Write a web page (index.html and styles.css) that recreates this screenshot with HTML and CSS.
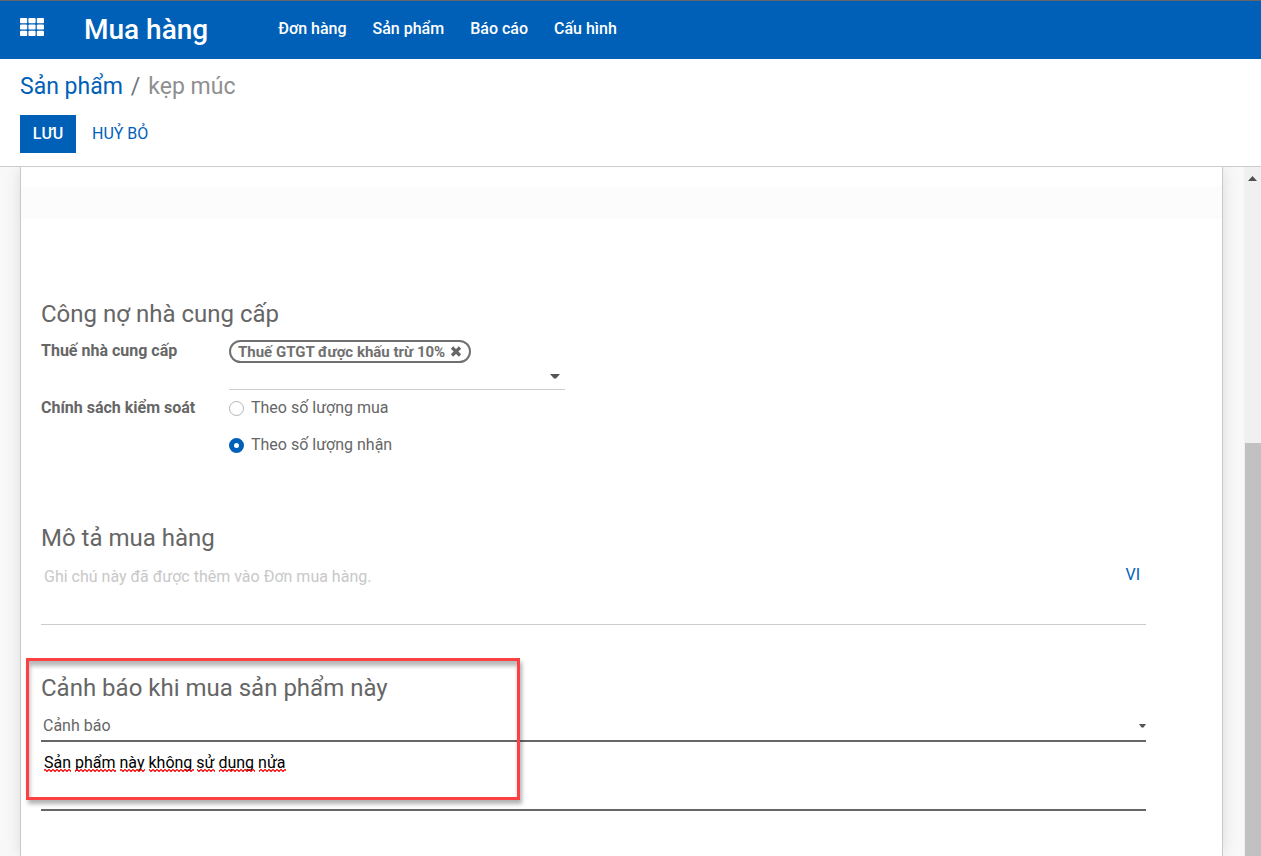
FILE: index.html
```
<!DOCTYPE html>
<html lang="vi">
<head>
<meta charset="utf-8">
<meta name="viewport" content="width=device-width, initial-scale=1">
<title>Mua hàng - kẹp múc</title>
<link rel="stylesheet" href="styles.css">
</head>
<body>
<header class="navbar">
  <button class="apps" type="button" aria-label="Ứng dụng">
    <svg width="24" height="18" viewBox="0 0 24 18" fill="#fff" aria-hidden="true">
      <rect x="0" y="0" width="7.200" height="5.200" rx="1"/><rect x="8.400" y="0" width="7.200" height="5.200" rx="1"/><rect x="16.800" y="0" width="7.200" height="5.200" rx="1"/>
      <rect x="0" y="6.400" width="7.200" height="5.200" rx="1"/><rect x="8.400" y="6.400" width="7.200" height="5.200" rx="1"/><rect x="16.800" y="6.400" width="7.200" height="5.200" rx="1"/>
      <rect x="0" y="12.800" width="7.200" height="5.200" rx="1"/><rect x="8.400" y="12.800" width="7.200" height="5.200" rx="1"/><rect x="16.800" y="12.800" width="7.200" height="5.200" rx="1"/>
    </svg>
  </button>
  <a class="brand" href="#">Mua hàng</a>
  <nav class="menu">
    <a href="#">Đơn hàng</a>
    <a href="#">Sản phẩm</a>
    <a href="#">Báo cáo</a>
    <a href="#">Cấu hình</a>
  </nav>
</header>

<div class="control-panel">
  <div class="breadcrumb"><a href="#">Sản phẩm</a><span class="slash">/</span><span class="current">kẹp múc</span></div>
  <div class="actions">
    <button class="btn btn-primary" type="button">LƯU</button>
    <button class="btn btn-link" type="button">HUỶ BỎ</button>
  </div>
</div>

<div class="view">
  <main class="content">
    <form class="sheet">
      <div class="band"></div>

      <section class="group debts">
        <h2>Công nợ nhà cung cấp</h2>
        <div class="fields">
          <label class="name" for="tax">Thuế nhà cung cấp</label>
          <div class="tags">
            <span class="tag">Thuế GTGT được khấu trừ 10%
              <button class="tag-remove" type="button" aria-label="Xoá">
                <svg width="12" height="11" viewBox="0 0 12 11" aria-hidden="true"><path d="M2 1.500 10 9.500M10 1.500 2 9.500" stroke="#666" stroke-width="3.200"/></svg>
              </button>
            </span>
            <div class="tag-entry">
              <input id="tax" type="text">
              <svg width="10" height="5" viewBox="0 0 10 5" fill="#555" aria-hidden="true"><path d="M0 0H10L6 4.500H4Z"/></svg>
            </div>
          </div>
          <span class="name" id="policy">Chính sách kiểm soát</span>
          <div class="radios" role="radiogroup" aria-labelledby="policy">
            <label><input type="radio" name="policy">Theo số lượng mua</label>
            <label><input type="radio" name="policy" checked>Theo số lượng nhận</label>
          </div>
        </div>
      </section>

      <section class="group">
        <h2 id="desc-title">Mô tả mua hàng</h2>
        <div class="description">
          <textarea aria-labelledby="desc-title" placeholder="Ghi chú này đã được thêm vào Đơn mua hàng."></textarea>
          <button class="lang" type="button">VI</button>
        </div>
      </section>

      <section class="group warning">
        <h2 id="warn-title">Cảnh báo khi mua sản phẩm này</h2>
        <div class="select-row">
          <select aria-labelledby="warn-title"><option>Cảnh báo</option></select>
          <svg width="7" height="4" viewBox="0 0 7 4" fill="#555" aria-hidden="true"><path d="M0 0H7L4.500 3.500H2.500Z"/></svg>
        </div>
        <div class="message">
          <textarea aria-labelledby="warn-title" spellcheck="false">Sản phẩm này không sử dụng nửa</textarea>
          <svg class="spelling" width="250" height="3" viewBox="0 0 250 3" aria-hidden="true">
            <defs><pattern id="wave" width="4" height="3" patternUnits="userSpaceOnUse"><path d="M-1 .5 0 .5 2 2.500 4 .5 5 .5" fill="none" stroke="#f00000" stroke-width="1.200"/></pattern></defs>
            <g fill="url(#wave)"><rect x="3" width="27" height="3"/><rect x="34" width="41" height="3"/><rect x="79" width="25" height="3"/><rect x="108" width="45" height="3"/><rect x="156" width="18" height="3"/><rect x="178" width="36" height="3"/><rect x="218" width="27" height="3"/></g>
          </svg>
        </div>
        <div class="highlight"></div>
      </section>
    </form>
  </main>
  <div class="scrollbar" aria-hidden="true">
    <svg width="9" height="5" viewBox="0 0 9 5" fill="#505050"><path d="M4.500 0 9 5H0Z"/></svg>
    <div class="thumb"></div>
  </div>
</div>
</body>
</html>
```
FILE: styles.css
```
* { box-sizing: border-box; }

body {
  margin: 0;
  height: 100vh;
  display: flex;
  flex-direction: column;
  overflow: hidden;
  background: #fff;
  color: #666;
  font: 16px/24px Roboto, "Noto Sans", sans-serif;
}

a { color: #0060b8; text-decoration: none; }

button, input, textarea, select {
  margin: 0;
  padding: 0;
  border: 0;
  border-radius: 0;
  background: none;
  color: inherit;
  font: inherit;
}

svg { display: block; }

.navbar {
  display: flex;
  align-items: center;
  flex: none;
  height: 59px;
  padding: 0 20px 2px;
  border-top: 1px solid #666;
  background: #0060b8;
}

.apps { margin-bottom: 4px; }
.navbar a { color: #fff; font-weight: 500; }
.navbar .brand { margin: 2px 70px 0 40px; font-size: 28px; line-height: 36px; }
.menu { display: flex; gap: 26px; }

.control-panel {
  flex: none;
  padding: 10px 20px 13px;
  border-bottom: 1px solid #ccc;
}

.breadcrumb { display: flex; gap: 8px; font-size: 23px; line-height: 36px; }
.slash { color: #6c757d; }
.current { color: #8f8f8f; }

.actions { display: flex; gap: 4px; padding-top: 10px; }
.btn { height: 38px; padding: 0 12px; }
.btn-primary { min-width: 56px; background: #0060b8; color: #fff; font-weight: 500; }
.btn-link { color: #0060b8; }

.view { display: flex; flex: 1; min-height: 0; }

.content {
  flex: 1;
  display: flex;
  min-width: 0;
  padding: 0 21px 0 20px;
  overflow: hidden;
  background: #f8f8f8;
}

.sheet {
  flex: 1;
  min-width: 0;
  padding: 19px 0 0;
  border: solid #c8c8d3;
  border-width: 0 1px;
  background: #fff;
  box-shadow: 0 0 16px -2px rgba(0, 0, 0, .15);
}

.band { height: 33px; background: #fcfcfc; }

.group { position: relative; margin: 0 76px 45px 20px; }
.debts { margin: 77px 76px 63px 20px; }

h2 { margin: 0; font-size: 24px; font-weight: 400; line-height: 36px; }

.fields {
  display: grid;
  grid-template-columns: 188px minmax(0, 336px);
  row-gap: 6px;
  padding-top: 7px;
}

.name { font-weight: 700; }

.tag {
  display: inline-flex;
  align-items: center;
  gap: 5px;
  height: 23px;
  margin-top: 1px;
  padding: 0 7px;
  border: 2px solid #707070;
  border-radius: 12px;
  font-size: 15px;
  line-height: 18px;
  font-weight: 700;
  color: #707070;
  vertical-align: top;
}

.tag-entry {
  display: flex;
  align-items: center;
  height: 27px;
  padding-right: 5px;
  border-bottom: 1px solid #ccc;
}

.tag-entry input { flex: 1; min-width: 0; outline: none; }

.radios { display: flex; flex-direction: column; gap: 13px; }
.radios label { display: flex; align-items: center; gap: 7px; }

.radios input {
  appearance: none;
  width: 15px;
  height: 15px;
  margin-top: 1px;
  border: 1px solid #b0b5ba;
  border-radius: 50%;
  background: #fff;
}

.radios input:checked { border: 5px solid #0060b8; }

.description {
  display: flex;
  align-items: flex-start;
  height: 69px;
  padding: 9px 6px 0 3px;
  border-bottom: 1px solid #ccc;
}

textarea { display: block; flex: 1; width: 100%; height: 58px; resize: none; outline: none; overflow: hidden; }
textarea::placeholder { color: #c8c8c8; opacity: 1; }
.lang { color: #0060b8; line-height: 20px; }

.select-row {
  display: flex;
  align-items: center;
  height: 36px;
  padding-top: 6px;
  border-bottom: 2px solid #666;
}

.select-row select { flex: 1; appearance: none; height: 24px; padding: 0 2px; outline: none; }

.message {
  position: relative;
  height: 69px;
  padding: 9px 3px 0;
  border-bottom: 2px solid #666;
  color: #000;
}

.spelling { position: absolute; left: 0; top: 27px; }

.highlight {
  position: absolute;
  left: -15px;
  top: -12px;
  width: 494px;
  height: 142px;
  border: 3px solid #fd4044;
  box-shadow: 2px 4px 4px rgba(0, 0, 0, .3), inset 1px 5px 4px rgba(0, 0, 0, .28);
  pointer-events: none;
}

.scrollbar {
  display: flex;
  flex-direction: column;
  align-items: center;
  flex: none;
  width: 17px;
  padding-top: 9px;
  background: #f0f0f0;
}

.thumb { flex: 1; width: 100%; margin-top: 262px; border-left: 1px solid #f0f0f0; background: #c1c1c1; }
```
